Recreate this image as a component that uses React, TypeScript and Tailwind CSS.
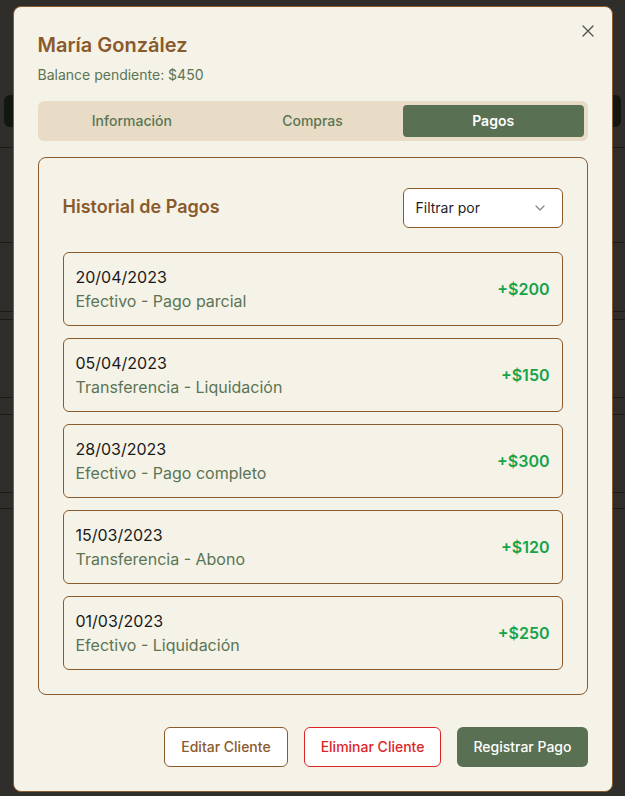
import * as React from "react";
import { X, ChevronDown } from "lucide-react";

const pagos = [
  { fecha: "20/04/2023", detalle: "Efectivo - Pago parcial", monto: "+$200" },
  { fecha: "05/04/2023", detalle: "Transferencia - Liquidación", monto: "+$150" },
  { fecha: "28/03/2023", detalle: "Efectivo - Pago completo", monto: "+$300" },
  { fecha: "15/03/2023", detalle: "Transferencia - Abono", monto: "+$120" },
  { fecha: "01/03/2023", detalle: "Efectivo - Liquidación", monto: "+$250" },
];

function PageBehind() {
  // the client list under the dimmed overlay
  return (
    <div className="w-full">
      <div className="px-1 pt-[95px]">
        <div className="h-8 rounded-md bg-[#131711]" />
      </div>
      <div className="h-[21px] border-b border-[#1d1914]" />
      <div className="h-[95px] border-b border-[#1d1914]" />
      <div className="h-[69px] border-b border-[#1d1914]" />
      <div className="h-[8px] border-b border-[#1d1914]" />
      <div className="h-[78px] border-b border-[#1d1914]" />
      <div className="h-[17px] border-b border-[#1d1914]" />
      <div className="h-[78px] border-b border-[#1d1914]" />
      <div className="h-[16px] border-b border-[#1d1914]" />
    </div>
  );
}

export default function App() {
  const [tab, setTab] = React.useState("pagos");

  const tabs = [
    { id: "info", label: "Información" },
    { id: "compras", label: "Compras" },
    { id: "pagos", label: "Pagos" },
  ];

  return (
    <div className="relative min-h-screen bg-[#302e2b] font-['Inter',sans-serif]">
      <PageBehind />

      <div className="fixed inset-0 flex items-center justify-center pt-px">
        <div className="relative flex w-[600px] flex-col rounded-lg border border-[#8b5a2b] bg-[#f5f2e8] p-6">
          <button className="absolute right-[14px] top-[14px] text-[#2f2f2f] opacity-80">
            <X size={20} strokeWidth={1.6} />
          </button>

          <div className="flex flex-col gap-1.5">
            <h2 className="text-xl leading-7 font-semibold text-[#8b5a2b]">María González</h2>
            <p className="text-sm leading-5 text-[#5b7553]">Balance pendiente: $450</p>
          </div>

          <div className="mt-4 grid h-10 grid-cols-3 rounded-md bg-[#e8dcc7] p-1">
            {tabs.map((t) => (
              <button
                key={t.id}
                onClick={() => setTab(t.id)}
                className={
                  tab === t.id
                    ? "rounded-sm bg-[#5a7052] text-sm font-semibold text-white"
                    : "rounded-sm text-sm font-medium text-[#5b7553]"
                }
              >
                {t.label}
              </button>
            ))}
          </div>

          <div className="mt-4 rounded-lg border border-[#8b5a2b] px-6 pt-[30px] pb-6">
            <div className="flex items-start justify-between">
              <h3 className="pt-[5px] text-lg leading-7 font-semibold text-[#8b5a2b]">Historial de Pagos</h3>
              <div className="flex h-10 w-40 items-center justify-between rounded-md border border-[#8b5a2b] bg-white pl-3 pr-[14px] text-sm text-[#1f1f1f]">
                <span>Filtrar por</span>
                <ChevronDown size={16} className="text-[#8a8a8a]" />
              </div>
            </div>

            <div className="mt-6 flex flex-col gap-3">
              {pagos.map((p) => (
                <div
                  key={p.fecha}
                  className="flex items-center justify-between rounded-md border border-[#8b5a2b] p-3"
                >
                  <div className="flex flex-col">
                    <span className="text-base leading-6 text-[#1a1a1a]">{p.fecha}</span>
                    <span className="text-base leading-6 text-[#5b7553]">{p.detalle}</span>
                  </div>
                  <span className="text-base font-semibold text-[#16a34a]">{p.monto}</span>
                </div>
              ))}
            </div>
          </div>

          <div className="mt-8 flex justify-end gap-4">
            <button className="h-10 rounded-md border border-[#8b5a2b] bg-white px-4 text-sm font-medium text-[#8b5a2b]">
              Editar Cliente
            </button>
            <button className="h-10 rounded-md border border-[#dc2626] bg-white px-4 text-sm font-medium text-[#dc2626]">
              Eliminar Cliente
            </button>
            <button className="h-10 rounded-md bg-[#5a7052] px-4 text-sm font-medium text-white">
              Registrar Pago
            </button>
          </div>
        </div>
      </div>
    </div>
  );
}
